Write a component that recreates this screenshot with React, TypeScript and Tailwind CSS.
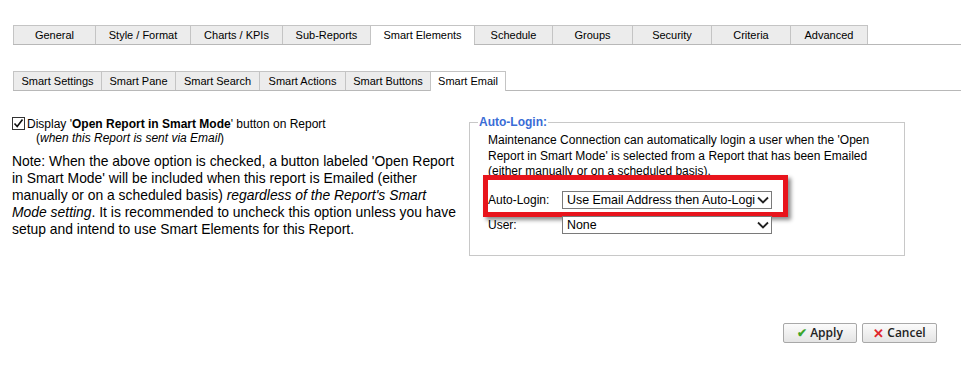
import React from "react";

type TabProps = { label: string; w: string; active?: boolean; last?: boolean };

function Tab({ label, w, active, last }: TabProps) {
  return (
    <div
      className={`${w} flex items-center justify-center text-[11px] text-black border-t border-l border-[#c4c4c4] ${
        last ? "border-r" : ""
      } ${active ? "bg-white h-[20px] -mb-px relative" : "bg-[#ececec] h-[19px]"}`}
    >
      {label}
    </div>
  );
}

function Chevron() {
  return (
    <svg width="12" height="8" viewBox="0 0 12 8" className="shrink-0">
      <path d="M1 1.5 L6 6.5 L11 1.5" fill="none" stroke="#222" strokeWidth="1.8" />
    </svg>
  );
}

function Select({ value }: { value: string }) {
  return (
    <div className="w-[210px] h-[18px] border border-[#7a7a7a] bg-white flex items-center pl-[4px] pr-[2px] gap-[2px]">
      <span className="flex-1 overflow-hidden whitespace-nowrap text-[12.4px] leading-[16px] text-black">{value}</span>
      <Chevron />
    </div>
  );
}

export default function App() {
  return (
    <div className="w-[977px] h-[379px] bg-white font-['Liberation_Sans',Arial,sans-serif] text-black overflow-hidden">
      {/* Main tabs */}
      <div className="ml-[13px] mt-[25px] w-[948px] flex items-end border-b border-[#b8b8b8]">
        <Tab label="General" w="w-[82px]" />
        <Tab label="Style / Format" w="w-[95px]" />
        <Tab label="Charts / KPIs" w="w-[92px]" />
        <Tab label="Sub-Reports" w="w-[88px]" />
        <Tab label="Smart Elements" w="w-[104px]" active />
        <Tab label="Schedule" w="w-[78px]" />
        <Tab label="Groups" w="w-[80px]" />
        <Tab label="Security" w="w-[79px]" />
        <Tab label="Criteria" w="w-[79px]" />
        <Tab label="Advanced" w="w-[78px]" last />
      </div>

      {/* Sub tabs */}
      <div className="ml-[13px] mt-[26px] w-[948px] flex items-end border-b border-[#b8b8b8]">
        <Tab label="Smart Settings" w="w-[88px]" />
        <Tab label="Smart Pane" w="w-[74px]" />
        <Tab label="Smart Search" w="w-[84px]" />
        <Tab label="Smart Actions" w="w-[86px]" />
        <Tab label="Smart Buttons" w="w-[85px]" />
        <Tab label="Smart Email" w="w-[76px]" active last />
      </div>

      {/* Content */}
      <div className="flex items-start mt-[26px]">
        <div className="w-[469px] pl-[12px]">
          <div className="flex items-start text-[12px] leading-[14px]">
            <span className="w-[13px] h-[13px] border border-[#333] bg-white flex items-center justify-center shrink-0">
              <svg width="11" height="11" viewBox="0 0 11 11">
                <path d="M1.5 5.5 L4.2 8.5 L9.5 1.5" fill="none" stroke="#111" strokeWidth="1.6" />
              </svg>
            </span>
            <span className="ml-[2px]">
              Display '<b>Open Report in Smart Mode</b>' button on Report
            </span>
          </div>
          <div className="pl-[24px] text-[12px] leading-[15px]">
            (<i>when this Report is sent via Email</i>)
          </div>
          <p className="mt-[7px] text-[13.9px] leading-[17px] w-[452px]">
            Note: When the above option is checked, a button labeled 'Open Report in Smart Mode' will be
            included when this report is Emailed (either manually or on a scheduled basis){" "}
            <i>regardless of the Report's Smart Mode setting</i>. It is recommended to uncheck this option
            unless you have setup and intend to use Smart Elements for this Report.
          </p>
        </div>

        <fieldset className="relative w-[436px] h-[141px] mt-[-2px] border border-[#c8c8c8] pl-[18px] pr-[10px] pt-[4px] m-0">
          <legend className="ml-[-10px] px-[1px] text-[12px] font-bold text-[#3a6cd6] leading-[14px]">Auto-Login:</legend>
          <div className="text-[12px] leading-[15.5px] w-[400px]">
            Maintenance Connection can automatically login a user when the 'Open Report in Smart Mode' is
            selected from a Report that has been Emailed (either manually or on a scheduled basis).
          </div>

          {/* Red annotation box */}
          <div className="absolute left-[13px] top-[46px] w-[305px] h-[42px] border-[5px] border-[#e8141c] bg-white shadow-[3px_3px_4px_rgba(0,0,0,0.45)]" />

          <div className="relative mt-[11px] flex items-center h-[18px]">
            <span className="w-[74px] text-[12px]">Auto-Login:</span>
            <Select value="Use Email Address then Auto-Login" />
          </div>
          <div className="relative mt-[7px] flex items-center h-[18px]">
            <span className="w-[74px] text-[12px]">User:</span>
            <Select value="None" />
          </div>
        </fieldset>
      </div>

      {/* Buttons */}
      <div className="flex justify-end gap-[5px] mt-[67px] pr-[40px] font-['Open_Sans',sans-serif]">
        <button className="w-[74px] h-[20px] flex items-center justify-center gap-[3px] rounded-[2px] border border-[#a8a8a8] bg-[linear-gradient(#fbfbfb,#e4e4e4)] text-[12px] font-semibold leading-none text-[#222]">
          <span className="text-[#3aa52a] text-[12px]">✔</span>Apply
        </button>
        <button className="w-[75px] h-[20px] flex items-center justify-center gap-[3px] rounded-[2px] border border-[#a8a8a8] bg-[linear-gradient(#fbfbfb,#e4e4e4)] text-[12px] font-semibold leading-none text-[#222]">
          <span className="text-[#e0252b] text-[13px]">✕</span>Cancel
        </button>
      </div>
    </div>
  );
}
